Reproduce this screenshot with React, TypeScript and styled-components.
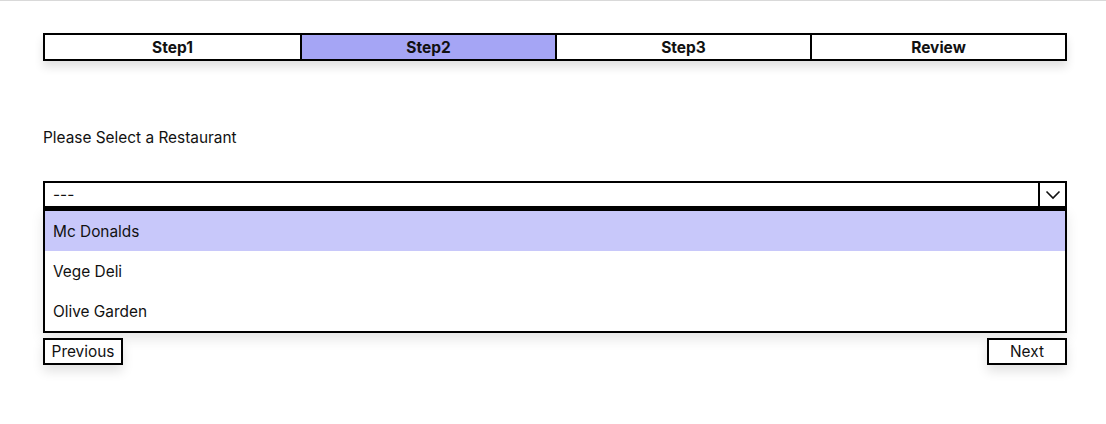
import React, { useState } from 'react';
import styled, { createGlobalStyle } from 'styled-components';

const GlobalStyle = createGlobalStyle`
  html, body {
    margin: 0;
    padding: 0;
    background: #fff;
    font-family: Inter, "Noto Sans", sans-serif;
    color: #111;
  }
`;

const Page = styled.div`
  border-top: 1px solid #d9d9d9;
  padding: 32px 0 0 43px;
  height: 391px;
`;

const Wizard = styled.div`
  width: 1024px;
  display: flex;
  flex-direction: column;
`;

const Stepper = styled.div`
  display: grid;
  grid-template-columns: repeat(4, 1fr);
  border: 2px solid #000;
  box-shadow: 0 6px 10px rgba(0, 0, 0, 0.12);
  height: 24px;
`;

const Step = styled.div<{ active?: boolean }>`
  display: flex;
  align-items: center;
  justify-content: center;
  font-weight: 700;
  font-size: 15.5px;
  background: ${p => (p.active ? '#a5a5f5' : '#fff')};
  & + & {
    border-left: 2px solid #000;
  }
`;

const Label = styled.div`
  margin-top: 68px;
  font-size: 15.4px;
  line-height: 18px;
`;

const SelectBox = styled.div`
  margin-top: 34px;
  display: flex;
  border: 2px solid #000;
  height: 23px;
  font-size: 15.4px;
`;

const SelectValue = styled.div`
  flex: 1;
  display: flex;
  align-items: center;
  padding-left: 8px;
`;

const Arrow = styled.div`
  width: 25px;
  border-left: 2px solid #000;
  display: flex;
  align-items: center;
  justify-content: center;
`;

const OptionList = styled.div`
  border: 2px solid #000;
  border-top-width: 3px;
  box-shadow: 0 6px 12px rgba(0, 0, 0, 0.1);
`;

const Option = styled.div<{ highlighted?: boolean }>`
  height: 40px;
  display: flex;
  align-items: center;
  padding-left: 8px;
  font-size: 15.4px;
  background: ${p => (p.highlighted ? '#c8c8fa' : '#fff')};
`;

const Nav = styled.div`
  margin-top: 5px;
  display: flex;
  justify-content: space-between;
`;

const NavButton = styled.button`
  width: 80px;
  height: 27px;
  border: 2px solid #000;
  background: #fff;
  font-family: Inter, "Noto Sans", sans-serif;
  font-size: 15.4px;
  color: #111;
  padding: 0;
  box-shadow: 0 6px 12px rgba(0, 0, 0, 0.12);
  cursor: pointer;
`;

const restaurants = ['Mc Donalds', 'Vege Deli', 'Olive Garden'];

export default function App() {
  const [hover, setHover] = useState(0);
  return (
    <>
      <GlobalStyle />
      <Page>
        <Wizard>
          <Stepper>
            <Step>Step1</Step>
            <Step active>Step2</Step>
            <Step>Step3</Step>
            <Step>Review</Step>
          </Stepper>
          <Label>Please Select a Restaurant</Label>
          <SelectBox>
            <SelectValue>---</SelectValue>
            <Arrow>
              <svg width="16" height="10" viewBox="0 0 16 10">
                <path d="M1.5 1.5 L8 8 L14.5 1.5" fill="none" stroke="#111" strokeWidth="1.6" />
              </svg>
            </Arrow>
          </SelectBox>
          <OptionList>
            {restaurants.map((r, i) => (
              <Option key={r} highlighted={i === hover} onMouseEnter={() => setHover(i)}>
                {r}
              </Option>
            ))}
          </OptionList>
          <Nav>
            <NavButton>Previous</NavButton>
            <NavButton>Next</NavButton>
          </Nav>
        </Wizard>
      </Page>
    </>
  );
}
